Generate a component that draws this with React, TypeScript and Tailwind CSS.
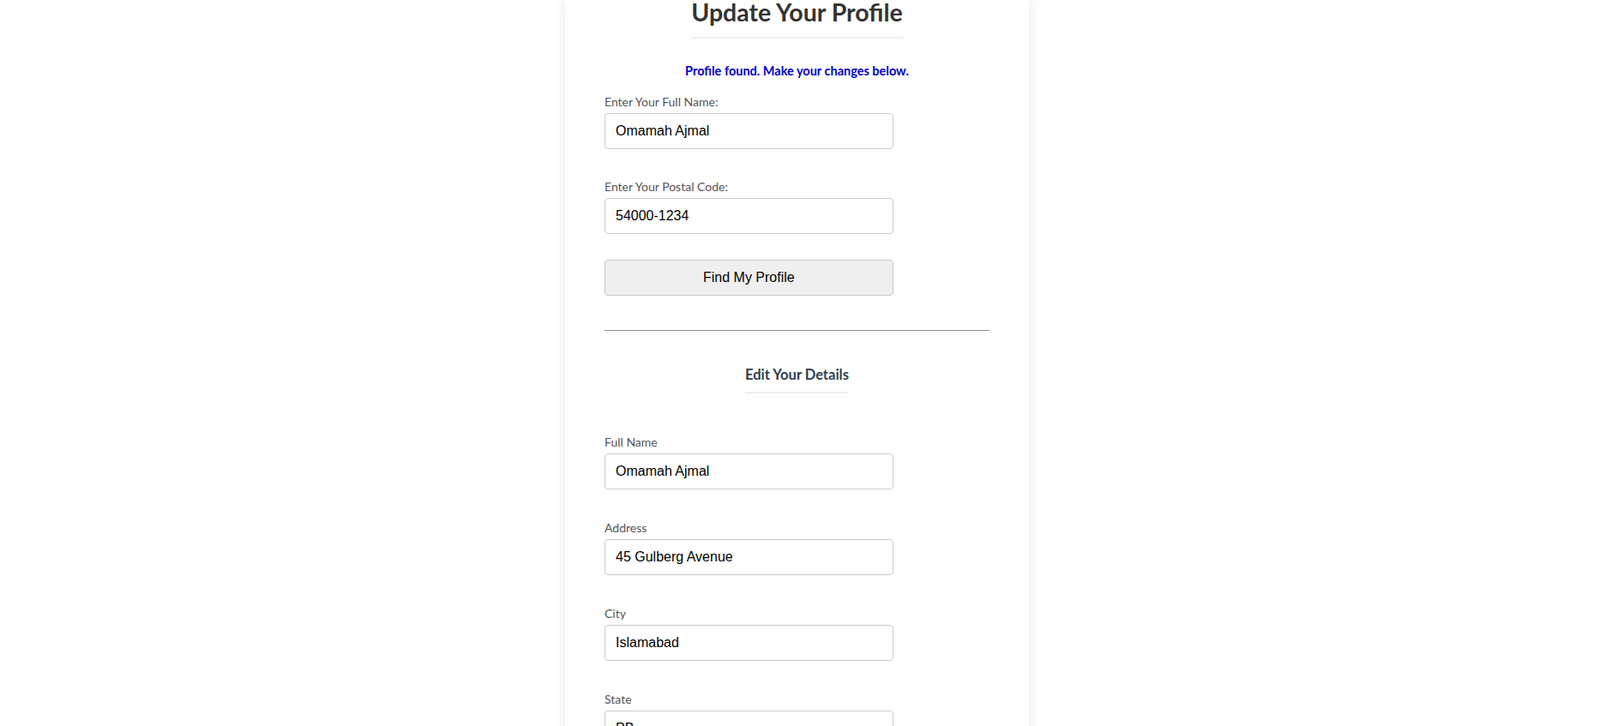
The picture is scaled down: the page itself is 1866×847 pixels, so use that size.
import React from "react";

const fieldLabel = "block text-[14px] leading-[16px] text-[#555] mb-[5px]";
const fieldInput =
  "block w-3/4 h-[42px] px-3 border border-[#ccc] rounded bg-white text-[16px] text-black font-['Liberation_Sans',Arial,sans-serif] outline-none";

function Field({ label, value, first }: { label: string; value: string; first?: boolean }) {
  return (
    <div className={first ? "" : "mt-[37px]"}>
      <label className={fieldLabel}>{label}</label>
      <input className={fieldInput} defaultValue={value} />
    </div>
  );
}

export default function App() {
  return (
    <div className="min-h-screen bg-white flex justify-center pr-[7px]">
      <div className="w-[541px] bg-white shadow-[0_0_15px_rgba(0,0,0,0.1)] px-[46px] pb-12 font-['Lato',sans-serif]">
        {/* search section */}
        <div className="text-center">
          <h2 className="inline-block text-[28.5px] leading-[28px] font-bold text-[#333] pb-[15px] border-b-2 border-[#eee]">
            Update Your Profile
          </h2>
        </div>
        <p className="mt-[28px] text-center text-[14.5px] leading-[20px] font-bold text-[#0000cc]">
          Profile found. Make your changes below.
        </p>

        <form className="mt-[18px]" onSubmit={(e) => e.preventDefault()}>
          <div>
            <label className={fieldLabel}>Enter Your Full Name:</label>
            <input className={fieldInput} defaultValue="Omamah Ajmal" />
          </div>
          <div className="mt-[36px]">
            <label className={fieldLabel}>Enter Your Postal Code:</label>
            <input className={fieldInput} defaultValue="54000-1234" />
          </div>
          <button
            type="submit"
            className="mt-[30px] w-3/4 h-[42px] bg-[#efefef] border border-[#c6c6c6] rounded text-[16px] text-black font-['Liberation_Sans',Arial,sans-serif]"
          >
            Find My Profile
          </button>
        </form>

        <div className="mt-[40px] h-px bg-[#959595]" />

        {/* edit section */}
        <div className="mt-[39px] text-center">
          <h3 className="inline-block text-[16.5px] leading-[20px] font-bold text-[#2c3e50] pb-[10px] border-b-2 border-[#eee]">
            Edit Your Details
          </h3>
        </div>

        <form className="mt-[49px]" onSubmit={(e) => e.preventDefault()}>
          <Field first label="Full Name" value="Omamah Ajmal" />
          <Field label="Address" value="45 Gulberg Avenue" />
          <Field label="City" value="Islamabad" />
          <Field label="State" value="PB" />
          <Field label="Postal Code" value="54000-1234" />
          <button
            type="submit"
            className="mt-[30px] w-3/4 h-[42px] bg-[#efefef] border border-[#c6c6c6] rounded text-[16px] text-black font-['Liberation_Sans',Arial,sans-serif]"
          >
            Save Changes
          </button>
        </form>
      </div>
    </div>
  );
}
